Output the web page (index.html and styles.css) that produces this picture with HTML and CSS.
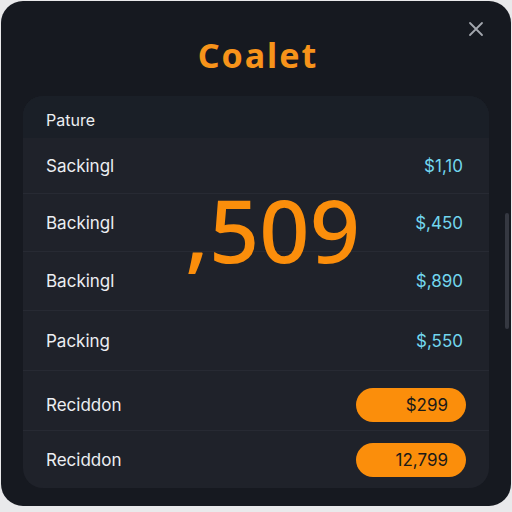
FILE: index.html
```html
<!DOCTYPE html>
<html>
<head>
<meta charset="utf-8">
<link rel="stylesheet" href="styles.css">
</head>
<body>
<div class="panel">
  <button class="close" aria-label="Close">
    <svg width="16" height="16" viewBox="0 0 16 16"><path d="M2 2L14 14M14 2L2 14" stroke="#a3a7ae" stroke-width="1.8" stroke-linecap="round"/></svg>
  </button>
  <div class="head"><h1 class="title">Coalet</h1></div>
  <div class="card">
    <div class="row hdr"><span class="label">Pature</span></div>
    <div class="row r1"><span class="label">Sackingl</span><span class="val">$1,10</span></div>
    <div class="row r2"><span class="label">Backingl</span><span class="val">$,450</span></div>
    <div class="row r3"><span class="label">Backingl</span><span class="val">$,890</span></div>
    <div class="row r4"><span class="label">Packing</span><span class="val">$,550</span></div>
    <div class="row r5"><span class="label">Reciddon</span><span class="pill">$299</span></div>
    <div class="row r6 last"><span class="label">Reciddon</span><span class="pill">12,799</span></div>
    <div class="big">,509</div>
  </div>
  <div class="scroll"></div>
</div>
</body>
</html>
```
FILE: styles.css
```css
html, body { margin: 0; padding: 0; }
body {
  width: 512px; height: 512px; overflow: hidden;
  background: #e9e9eb;
  font-family: Inter, "Noto Sans", sans-serif;
}
.panel {
  position: relative;
  box-sizing: border-box;
  margin: 1px 1px 0 1px;
  width: 510px; height: 505px;
  border-radius: 22px;
  background: #161920;
  padding: 0 22px;
  display: flex; flex-direction: column;
}
.close {
  position: absolute; right: 26px; top: 19px;
  width: 18px; height: 18px; padding: 0; border: 0; background: none;
  display: flex; align-items: center; justify-content: center;
}
.head {
  height: 95px; display: flex; justify-content: center; align-items: flex-start;
}
.title {
  margin: 34px 0 0 4px;
  font-family: "Noto Sans", sans-serif;
  font-weight: 700; font-size: 34px; line-height: 40px;
  letter-spacing: 2px;
  color: #f7931a;
}
.card {
  position: relative;
  height: 392px;
  border-radius: 20px;
  background: #1f222a;
  overflow: hidden;
  display: flex; flex-direction: column;
}
.row {
  box-sizing: border-box;
  display: flex; align-items: center; justify-content: space-between;
  padding: 0 26px 0 23px;
  border-bottom: 1px solid #272a33;
  font-size: 17px; color: #eceef2;
}
.hdr { height: 42px; background: #1a1f27; border-bottom: 0; font-size: 16px; padding-top: 5px; }
.r1 { height: 56px; }
.r2 { height: 58px; }
.r3 { height: 59px; }
.r4 { height: 60px; }
.r5 { height: 60px; padding-right: 23px; padding-top: 9px; }
.r6 { height: 57px; padding-right: 23px; border-bottom: 0; }
.label { color: #eceef2; }
.val { color: #72d6ee; }
.pill {
  box-sizing: border-box;
  width: 110px; height: 34px; border-radius: 17px;
  background: #fb8e0b;
  color: #1b1a18;
  display: flex; align-items: center; justify-content: flex-end;
  padding-right: 18px;
  font-size: 17px;
}
.big {
  position: absolute; left: 162px; top: 83px;
  font-family: "Noto Sans", sans-serif;
  font-size: 88px; font-weight: 500; line-height: 100px;
  color: #fb8e0b;
}
.scroll {
  position: absolute; right: 2px; top: 212px;
  width: 4px; height: 116px; border-radius: 2px;
  background: #353841;
}
```
